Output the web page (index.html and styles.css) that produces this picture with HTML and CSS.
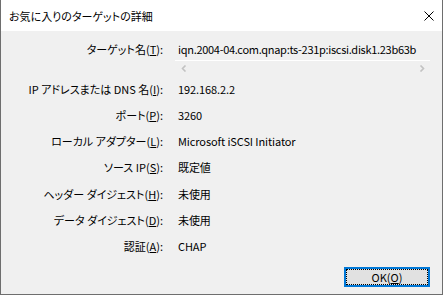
FILE: index.html
```html
<!DOCTYPE html>
<html lang="ja">
<head>
    <meta charset="UTF-8">
    <title>お気に入りのターゲットの詳細</title>
    <link rel="stylesheet" href="styles.css">
</head>
<body>
    <div class="window">
        <div class="title-bar">
            <span class="title">お気に入りのターゲットの詳細</span>
            <svg class="close-icon" width="10" height="10" viewBox="0 0 10 10">
                <path d="M0.5 0.5 L9.5 9.5 M9.5 0.5 L0.5 9.5" stroke="#000" stroke-width="1" fill="none"/>
            </svg>
        </div>
        <div class="details">
            <div class="label label-first">ターゲット名(<u>T</u>):</div>
            <div class="target-box">
                <div class="target-text">iqn.2004-04.com.qnap:ts-231p:iscsi.disk1.23b63b</div>
                <div class="h-scroll">
                    <span class="scroll-btn">
                        <svg width="6" height="7" viewBox="0 0 6 7"><path d="M4.5 0.5 L1.5 3.5 L4.5 6.5" stroke="#c2c2c2" stroke-width="1.6" fill="none"/></svg>
                    </span>
                    <span class="scroll-btn">
                        <svg width="6" height="7" viewBox="0 0 6 7"><path d="M1.5 0.5 L4.5 3.5 L1.5 6.5" stroke="#c2c2c2" stroke-width="1.6" fill="none"/></svg>
                    </span>
                </div>
            </div>

            <div class="label">IP アドレスまたは DNS 名(<u>I</u>):</div>
            <div class="value">192.168.2.2</div>

            <div class="label">ポート(<u>P</u>):</div>
            <div class="value">3260</div>

            <div class="label">ローカル アダプター(<u>L</u>):</div>
            <div class="value">Microsoft iSCSI Initiator</div>

            <div class="label">ソース IP(<u>S</u>):</div>
            <div class="value">既定値</div>

            <div class="label">ヘッダー ダイジェスト(<u>H</u>):</div>
            <div class="value">未使用</div>

            <div class="label">データ ダイジェスト(<u>D</u>):</div>
            <div class="value">未使用</div>

            <div class="label">認証(<u>A</u>):</div>
            <div class="value">CHAP</div>
        </div>
        <div class="footer">
            <button class="ok-btn">OK(<u>O</u>)</button>
        </div>
    </div>
</body>
</html>
```

FILE: styles.css
```css
html, body {
    margin: 0;
    padding: 0;
}
body {
    font-family: "Noto Sans CJK JP", "Liberation Sans", sans-serif;
    font-size: 11px;
    font-feature-settings: "palt";
    color: #000;
    background: #f0f0f0;
}
.window {
    width: 443px;
    height: 295px;
    box-sizing: border-box;
    border: 1px solid #6e6e6e;
    border-top: none;
    background: #f0f0f0;
    display: flex;
    flex-direction: column;
}
.title-bar {
    height: 31px;
    background: #fff;
    display: flex;
    align-items: center;
    justify-content: space-between;
    padding: 0 8px 0 8px;
    flex-shrink: 0;
}
.title {
    font-size: 11px;
}
.close-icon {
    display: block;
}
.details {
    display: grid;
    grid-template-columns: 162px 1fr;
    grid-template-rows: 38px 25.5px;
    grid-auto-rows: 26.3px;
    column-gap: 12px;
    padding: 7px 12px 0 0;
    align-items: center;
}
.label {
    text-align: right;
    white-space: nowrap;
}
.label-first {
    align-self: start;
    line-height: 22px;
}
.value {
    padding-left: 3px;
    white-space: nowrap;
    letter-spacing: -0.1px;
}
.target-box {
    align-self: start;
    overflow: hidden;
}
.target-text {
    height: 22px;
    line-height: 22px;
    padding-left: 3px;
    white-space: nowrap;
    overflow: hidden;
    letter-spacing: -0.3px;
    border-bottom: 1px solid #fff;
}
.h-scroll {
    height: 15px;
    display: flex;
    justify-content: space-between;
}
.scroll-btn {
    width: 17px;
    display: flex;
    align-items: center;
    justify-content: center;
}
.footer {
    margin-top: auto;
    display: flex;
    justify-content: flex-end;
    padding: 0 12px 7px 0;
}
.ok-btn {
    width: 86px;
    height: 20px;
    box-sizing: border-box;
    border: 2px solid #0078d7;
    background: #e1e1e1;
    outline: 1px dotted #000;
    outline-offset: -3px;
    font-family: "Noto Sans CJK JP", "Liberation Sans", sans-serif;
    font-size: 11px;
    line-height: 14px;
    padding: 0;
    color: #000;
}
```
